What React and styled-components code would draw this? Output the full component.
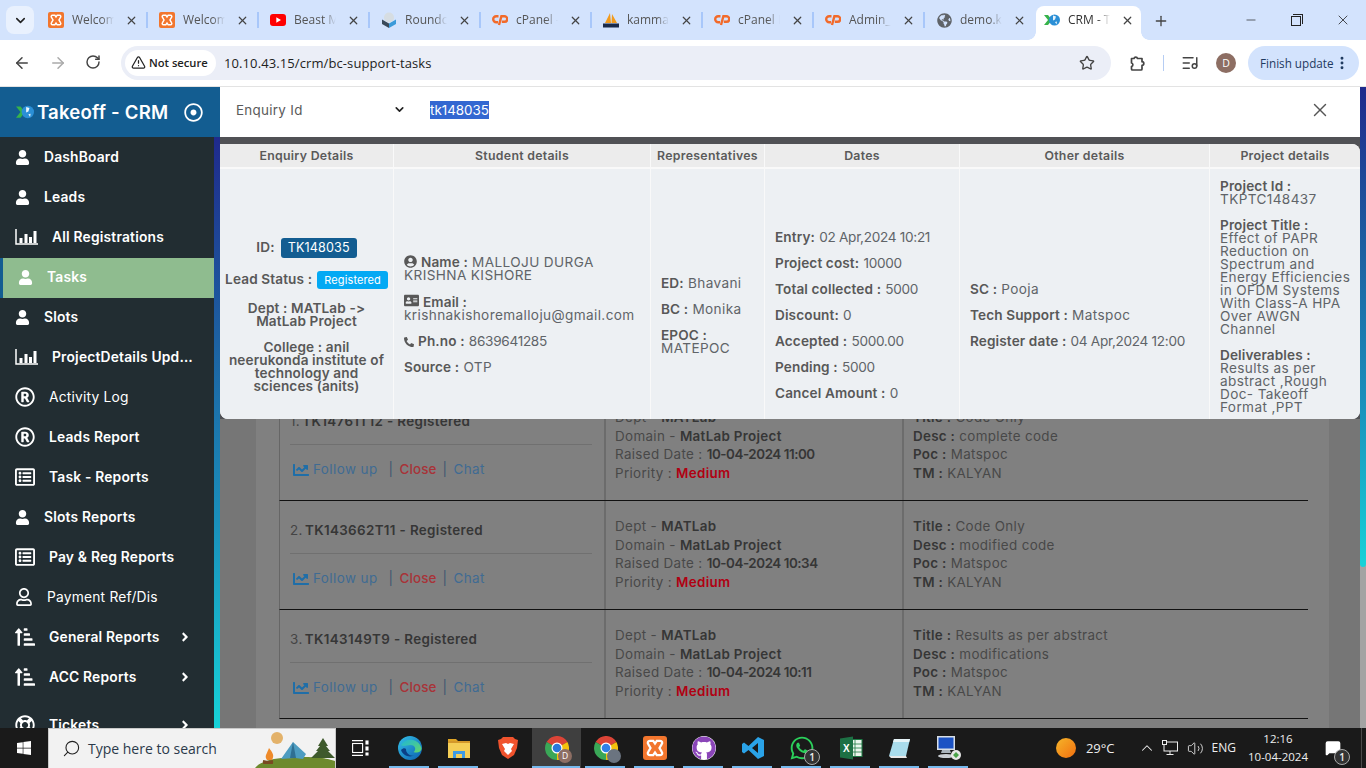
import React from 'react'
import styled, { createGlobalStyle } from 'styled-components'
import { ArrowLeft, ArrowRight, RotateCw, TriangleAlert, Star, ListMusic, EllipsisVertical, Plus, Minus, X, ChevronDown, ChevronUp, Search, MessageSquare, Volume2 } from 'lucide-react'
import {
  FaUser, FaRegUser, FaRegRegistered, FaRegListAlt, FaSortAmountUpAlt, FaRegLifeRing, FaAngleRight,
  FaRegDotCircle, FaUserCircle, FaAddressCard, FaPhoneAlt, FaChartLine, FaGlobeAmericas, FaWhatsapp, FaGithub, FaWindows,
} from 'react-icons/fa'

const MONT = `Inter, "Open Sans", sans-serif`
const CHROME = `"Open Sans", "Noto Sans", sans-serif`
const BLUE = '#135d91'
const STREAK = 'linear-gradient(to bottom, #1f2a8c 0%, #1d62a2 35%, #1a8fbb 65%, #17d2d8 100%)'

const Global = createGlobalStyle`
  html, body { margin: 0; padding: 0; background: #fff; overflow: hidden; }
  * { box-sizing: border-box; }
`

const Shell = styled.div`
  width: 1366px;
  height: 768px;
  display: flex;
  flex-direction: column;
  overflow: hidden;
  font-family: ${MONT};
`

/* browser chrome */
const TabStrip = styled.div`
  height: 40px;
  flex: none;
  background: #d3e3fd;
  display: flex;
  align-items: flex-start;
  padding: 6px 0 0 6px;
`
const TabSearch = styled.div`
  width: 28px;
  height: 28px;
  border-radius: 8px;
  background: #e9f1fe;
  color: #222;
  display: flex;
  align-items: center;
  justify-content: center;
  margin-right: 3px;
`
const Tab = styled.div`
  position: relative;
  width: ${p => (p.$active ? '105px' : '111px')};
  height: ${p => (p.$active ? '34px' : '28px')};
  padding: ${p => (p.$active ? '0 0 6px 8px' : '0 0 0 11px')};
  display: flex;
  align-items: center;
  gap: 8px;
  background: ${p => (p.$active ? '#fff' : 'transparent')};
  border-radius: 8px 8px 0 0;
  color: ${p => (p.$active ? '#333' : '#555')};
  &::after {
    content: '';
    display: ${p => (p.$noSep ? 'none' : 'block')};
    position: absolute;
    right: 0;
    top: 6px;
    height: 16px;
    width: 2px;
    background: #a8c7fa;
  }
`
const TabFlare = styled.span`
  position: absolute;
  bottom: 0;
  ${p => p.$side}: -8px;
  width: 8px;
  height: 8px;
  background: radial-gradient(circle at ${p => (p.$side === 'left' ? '0 0' : '100% 0')}, #d3e3fd 7.5px, #fff 8px);
`
const TabIcon = styled.span`
  width: 16px;
  height: 16px;
  flex: none;
  display: flex;
  align-items: center;
  justify-content: center;
`
const TabTitle = styled.span`
  width: 42px;
  flex: none;
  font: 12px/16px ${CHROME};
  white-space: nowrap;
  overflow: hidden;
  -webkit-mask-image: linear-gradient(to right, #000 70%, transparent 100%);
  mask-image: linear-gradient(to right, #000 70%, transparent 100%);
`
const TabClose = styled.span`
  display: flex;
  margin-left: 3px;
  color: #444;
`
const NewTab = styled.span`
  margin: 7px 0 0 12px;
  display: flex;
  color: #444;
`
const WindowButtons = styled.div`
  margin-left: auto;
  display: flex;
  margin-top: 6px;
  color: #222;
`
const WindowButton = styled.span`
  width: 46px;
  height: 16px;
  display: flex;
  align-items: center;
  justify-content: center;
`
const RestoreGlyph = styled.span`
  position: relative;
  width: 10px;
  height: 10px;
  border: 1px solid #222;
  background: #d3e3fd;
  margin: 2px 2px 0 0;
  &::before {
    content: '';
    position: absolute;
    left: 1px;
    top: -3px;
    width: 9px;
    height: 9px;
    border-top: 1px solid #222;
    border-right: 1px solid #222;
  }
`
const Toolbar = styled.div`
  height: 47px;
  flex: none;
  background: #fff;
  border-bottom: 1px solid #e3e3e3;
  border-radius: 8px 8px 0 0;
  display: flex;
  align-items: center;
  padding: 0 6px 1px 13px;
  color: #444;
`
const NavButton = styled.span`
  width: 18px;
  height: 18px;
  display: flex;
  margin-right: 18px;
  color: ${p => (p.$off ? '#aaa' : '#444')};
`
const Omnibox = styled.div`
  width: 990px;
  height: 34px;
  background: #ebeef7;
  border-radius: 17px;
  display: flex;
  align-items: center;
  padding: 0 16px 0 4px;
`
const SecureChip = styled.span`
  height: 26px;
  width: 91px;
  background: #fff;
  border-radius: 13px;
  display: flex;
  align-items: center;
  gap: 3px;
  padding-left: 6px;
  font: 600 11.2px/14px ${CHROME};
  color: #222;
`
const Url = styled.span`
  margin-left: 8px;
  font: 13px/16px ${CHROME};
  color: #222;
  letter-spacing: .1px;
`
const StarSlot = styled.span`
  margin-left: auto;
  display: flex;
`
const ToolIcon = styled.span`
  display: flex;
  margin-left: ${p => p.$left}px;
  color: #444;
`
const ToolDivider = styled.span`
  width: 1px;
  height: 16px;
  background: #b6cdf3;
  margin-left: 17px;
`
const Avatar = styled.span`
  width: 20px;
  height: 20px;
  border-radius: 50%;
  margin-left: ${p => p.$left || 18}px;
  background: #8d6e63;
  color: #fff;
  font: 10.5px/20px ${CHROME};
  text-align: center;
`
const UpdatePill = styled.div`
  margin-left: 12px;
  width: 111px;
  height: 34px;
  border-radius: 17px;
  background: #d3e3fd;
  color: #1f3a5f;
  display: flex;
  align-items: center;
  padding-left: 12px;
  font: 11.7px/16px ${CHROME};
  white-space: nowrap;
`

/* app */
const Page = styled.div`
  flex: 1;
  min-height: 0;
  display: flex;
  overflow: hidden;
`
const Side = styled.aside`
  width: 220px;
  flex: none;
  display: flex;
  flex-direction: column;
`
const Brand = styled.div`
  height: 50px;
  flex: none;
  background: ${BLUE};
  color: #fff;
  display: flex;
  align-items: center;
  padding: 0 17px 0 16px;
`
const BrandName = styled.span`
  margin-left: 3px;
  font: 600 18.6px/22px ${MONT};
  letter-spacing: .2px;
  white-space: nowrap;
`
const BrandToggle = styled.span`
  margin-left: auto;
  display: flex;
`
const SideBody = styled.div`
  flex: 1;
  min-height: 0;
  display: flex;
`
const Menu = styled.nav`
  width: 214px;
  background: #222d32;
  padding-top: 1px;
  overflow: hidden;
`
const Streak = styled.div`
  width: 6px;
  background: ${STREAK};
`
const MenuItem = styled.div`
  height: 40px;
  display: flex;
  align-items: center;
  gap: 14px;
  padding: 0 22px 2px 15px;
  margin-top: ${p => (p.$spaced ? '8px' : '0')};
  color: #fff;
  background: ${p => (p.$active ? '#8fbc8f' : 'transparent')};
  border-left: ${p => (p.$active ? `3px solid ${BLUE}` : 'none')};
`
const MenuIcon = styled.span`
  display: flex;
  flex: none;
  color: #fff;
`
const MenuLabel = styled.span`
  font: ${p => (p.$light ? 400 : 600)} 13.8px/18px ${MONT};
  letter-spacing: .2px;
  margin-right: ${p => (p.$wide ? '-8px' : '0')};
  white-space: nowrap;
  overflow: hidden;
  text-overflow: ellipsis;
  flex: 1;
  min-width: 0;
`

const Main = styled.main`
  flex: 1;
  min-width: 0;
  display: flex;
`
const Backdrop = styled.div`
  position: relative;
  flex: 1;
  min-width: 0;
  background: #767676;
  padding: 0 31px 0 36px;
  overflow: hidden;
`
const Card = styled.div`
  height: 100%;
  background: #808080;
  padding: 305px 21px 0 23px;
`
const TaskRow = styled.div`
  display: grid;
  grid-template-columns: 324px 298px 1fr;
  height: 109px;
  border-bottom: 1.5px solid #111;
  border-left: 1px solid #666;
`
const TaskMain = styled.div`
  display: flex;
  flex-direction: column;
  padding: 0 12px 0 10px;
`
const TaskTitle = styled.div`
  height: 53px;
  flex: none;
  padding-top: 20px;
  border-bottom: 1px solid #707070;
  font: 400 13.4px/19px ${MONT};
  letter-spacing: .4px;
  color: #444;
`
const TaskActions = styled.div`
  flex: 1;
  display: flex;
  align-items: center;
  padding: 0 0 6px 3px;
  font: 400 13.4px/19px ${MONT};
  letter-spacing: .45px;
  color: #3f6b93;
`
const FollowIcon = styled.span`
  display: flex;
  margin-right: 4px;
  color: #1f6ea8;
`
const Pipe = styled.span`
  margin: 0 ${p => p.$right ?? 6}px 0 ${p => p.$left ?? 6}px;
  color: #3c5670;
`
const CloseLink = styled.span`
  color: #a83338;
  font-weight: 500;
  letter-spacing: .15px;
`
const TaskCell = styled.div`
  border-left: 2px solid #6c6c6c;
  padding: 16px 0 0 9px;
  font: 400 13.4px/18.7px ${MONT};
  letter-spacing: .35px;
  color: #484848;
`
const Strong = styled.b`
  font-weight: 600;
  color: #363636;
  letter-spacing: .3px;
`
const TaskCode = styled(Strong)`
  margin-left: -2px;
  letter-spacing: .35px;
`
const DateText = styled(Strong)`
  letter-spacing: -.45px;
`
const Priority = styled.b`
  font-weight: 600;
  color: #b00012;
`

const Overlay = styled.div`
  position: absolute;
  left: 0;
  right: 0;
  top: 0;
  background: #505155;
`
const SearchBar = styled.div`
  height: 50px;
  background: #fff;
  display: flex;
  align-items: center;
  padding-bottom: 5px;
  color: #555;
`
const Picker = styled.div`
  width: 170px;
  margin-left: 16px;
  display: flex;
  align-items: center;
  justify-content: space-between;
  font: 400 13.4px/18px ${MONT};
  letter-spacing: .3px;
  color: #5a5a5a;
`
const Query = styled.span`
  margin-left: 24px;
  background: #3367d1;
  color: #fff;
  font: 400 13.4px/18px ${MONT};
  letter-spacing: 0;
`
const Dismiss = styled.span`
  margin-left: auto;
  margin-right: 29px;
  display: flex;
  color: #555;
`
const DetailPanel = styled.div`
  margin-top: 7px;
  display: grid;
  grid-template-columns: 174px 257px 114px 195px 250px 150px;
  grid-template-rows: 25px 250px;
  background: #f6f7f8;
  border-radius: 0 8px 8px 8px;
  overflow: hidden;
`
const HeadCell = styled.div`
  background: #ececec;
  border-right: ${p => (p.$last ? 'none' : '1.5px solid #f9f9f9')};
  border-bottom: 2px solid #f9f9f9;
  display: flex;
  align-items: center;
  justify-content: center;
  font: 600 12.3px/14px ${MONT};
  letter-spacing: .3px;
  color: #5a5a5a;
  white-space: nowrap;
`
const BodyCell = styled.div`
  background: #edf0f3;
  border-right: ${p => (p.$last ? 'none' : '1.5px solid #f9f9f9')};
  padding: ${p => p.$top ?? 42}px ${p => p.$pad ?? 10}px 0;
  display: flex;
  flex-direction: column;
  justify-content: center;
  text-align: ${p => (p.$center ? 'center' : 'left')};
  font: 400 13.6px/13px ${MONT};
  letter-spacing: .38px;
  color: #606468;
`
const Line = styled.div`
  margin-bottom: ${p => p.$gap ?? 13}px;
  white-space: ${p => (p.$keep ? 'nowrap' : 'normal')};
  &:last-child { margin-bottom: 0; }
`
const Key = styled.b`
  font-weight: 600;
  color: #585858;
  letter-spacing: .12px;
`
const Stamp = styled.span`
  letter-spacing: -.3px;
`
const KeyIcon = styled.span`
  display: inline-flex;
  align-items: center;
  height: 11px;
  vertical-align: -1px;
  margin-right: 4px;
  color: #585858;
`
const IdBadge = styled.span`
  display: inline-block;
  background: ${BLUE};
  color: #fff;
  border-radius: 3px;
  padding: 3px 7px;
  font: 400 12.6px/14px ${MONT};
  letter-spacing: .1px;
  margin-left: 2px;
`
const StatusBadge = styled.span`
  display: inline-block;
  background: #03a9f4;
  color: #fff;
  border-radius: 3px;
  padding: 3px 7px;
  font: 400 11px/12px ${MONT};
  letter-spacing: .1px;
  margin-left: 1px;
`

const ScrollTrack = styled.div`
  width: 6px;
  flex: none;
  background: #a3a3a3;
`
const ScrollThumb = styled.div`
  height: 480px;
  background: ${STREAK};
  border-radius: 0 0 3px 3px;
`

/* windows taskbar */
const Taskbar = styled.div`
  height: 40px;
  flex: none;
  background: #1a1a1a;
  display: flex;
  align-items: stretch;
  color: #fff;
`
const StartButton = styled.div`
  width: 48px;
  flex: none;
  display: flex;
  align-items: center;
  justify-content: center;
`
const SearchBox = styled.div`
  position: relative;
  width: 288px;
  flex: none;
  background: #f2f2f2;
  border: 1px solid #c9c9c9;
  border-bottom: none;
  display: flex;
  align-items: center;
  padding-left: 13px;
  color: #222;
  overflow: hidden;
`
const SearchText = styled.span`
  margin-left: 7px;
  font: 14px/20px ${CHROME};
  color: #2b3a4a;
`
const Scene = styled.span`
  position: absolute;
  right: 0;
  bottom: 0;
  display: flex;
`
const Dock = styled.div`
  display: flex;
`
const DockItem = styled.div`
  position: relative;
  width: 49px;
  display: flex;
  align-items: center;
  justify-content: center;
  background: ${p => (p.$focus ? '#3f3f3f' : 'transparent')};
  &::after {
    content: '';
    display: ${p => (p.$open ? 'block' : 'none')};
    position: absolute;
    bottom: 0;
    left: ${p => (p.$focus ? '0' : '4px')};
    right: ${p => (p.$focus ? '1px' : '5px')};
    height: 2px;
    background: #76b9ed;
  }
`
const Counter = styled.span`
  position: absolute;
  right: 6px;
  bottom: 3px;
  width: 16px;
  height: 16px;
  border-radius: 50%;
  background: #333;
  border: 1px solid #aaa;
  font: 600 10px/14px ${CHROME};
  text-align: center;
  color: #eee;
`
const MiniAvatar = styled.span`
  position: absolute;
  right: 9px;
  bottom: 5px;
  width: 14px;
  height: 14px;
  border-radius: 50%;
  background: ${p => p.$tone};
  color: #fff;
  font: 8.5px/14px ${CHROME};
  text-align: center;
`
const Tray = styled.div`
  margin-left: auto;
  display: flex;
  align-items: center;
  color: #eee;
  font: 12px/16px ${CHROME};
  padding-right: 4px;
  position: relative;
  &::after {
    content: '';
    position: absolute;
    right: 4px;
    top: 0;
    bottom: 0;
    width: 1px;
    background: #4a4a4a;
  }
`
const Sun = styled.span`
  width: 20px;
  height: 20px;
  border-radius: 50%;
  background: linear-gradient(135deg, #f5b52a, #f26f0f);
  margin-right: 10px;
`
const Temp = styled.span`
  font-size: 13px;
  margin-right: 23px;
`
const TrayIcon = styled.span`
  display: flex;
  margin-right: ${p => p.$right}px;
`
const Clock = styled.div`
  width: 74px;
  margin-left: 5px;
  text-align: center;
  font-size: 11.5px;
  line-height: 18px;
`
const Bell = styled.span`
  position: relative;
  display: flex;
  margin: 0 21px 0 10px;
`
const BellCount = styled(Counter)`
  right: -9px;
  bottom: -9px;
`

const Xampp = ({ size = 16 }) => (
  <svg width={size} height={size} viewBox="0 0 16 16">
    <rect width="16" height="16" rx="2" fill="#f2762e" />
    <path d="M4.500 3.200h2.300L8 5l1.200-1.800h2.300c1.200 0 1.700 1.300 1 2.200L11 8l1.500 2.600c.7.900.2 2.200-1 2.200H9.200L8 11l-1.200 1.800H4.500c-1.200 0-1.700-1.300-1-2.200L5 8 3.500 5.400c-.7-.9-.2-2.200 1-2.200z" fill="none" stroke="#fff" strokeWidth="1.5" />
  </svg>
)
const CPanel = () => (
  <svg width="16" height="12" viewBox="0 0 16 12">
    <path d="M6.500 2.200H4.200a3 3 0 0 0 0 6H6" fill="none" stroke="#f26a2a" strokeWidth="2.4" />
    <path d="M7 11l2.400-8.800h3a2.600 2.600 0 0 1 0 5.600H9.800" fill="none" stroke="#f26a2a" strokeWidth="2.4" />
  </svg>
)
const YouTube = () => (
  <svg width="16" height="12" viewBox="0 0 16 12">
    <rect width="16" height="12" rx="3" fill="#f00" />
    <path d="M6.300 3.200v5.600L11 6z" fill="#fff" />
  </svg>
)
const Roundcube = () => (
  <svg width="16" height="16" viewBox="0 0 16 16">
    <path d="M1 7.500 8 11.500v4.500L1 12z" fill="#3a4a5a" />
    <path d="M15 7.500 8 11.500v4.500l7-4z" fill="#3a9ad9" />
    <circle cx="8" cy="5.500" r="5" fill="#d6dde2" />
  </svg>
)
const Pma = () => (
  <svg width="16" height="16" viewBox="0 0 16 16">
    <path d="M2 11 7 1l1 10zM8.500 11 9 2l5 9z" fill="#f29b1d" />
    <rect x="0" y="11.500" width="16" height="4" fill="#1a2a4a" />
  </svg>
)
const CrmLogo = ({ size = 16 }) => (
  <svg width={size} height={size} viewBox="0 0 16 16">
    <path d="M0 3l4 0 4 5-4 5H0l4-5z" fill="#37b34a" />
    <circle cx="10.500" cy="8" r="5.500" fill="#2b8fd6" />
    <path d="M9 3.500l3 1-1 3-2 1zM11 10l2-.5-.5 3z" fill="#e8f4fb" />
  </svg>
)
const PuzzleIcon = () => (
  <svg width="18" height="18" viewBox="0 0 18 18" fill="none" stroke="#444" strokeWidth="1.700" strokeLinejoin="round">
    <path d="M3.500 4.500H6a1.800 1.800 0 0 1 3.500 0h4.500v3.200a1.800 1.800 0 0 1 0 3.600V15a1 1 0 0 1-1 1H4.500a1 1 0 0 1-1-1v-2.500a1.800 1.800 0 0 0 0-3.500z" />
  </svg>
)
const ChartBars = () => (
  <svg width="23" height="16" viewBox="0 0 23 16">
    <path d="M1 0v15h22" fill="none" stroke="#fff" strokeWidth="1.500" />
    <path d="M4.500 9h3v5h-3zM9.500 5h3v9h-3zM14 8h3v6h-3zM18.500 2h3v12h-3z" fill="#fff" />
  </svg>
)
const TaskView = () => (
  <svg width="17" height="16" viewBox="0 0 17 16" fill="none" stroke="#fff" strokeWidth="1.100">
    <path d="M0 .6h11M0 15.400h11" />
    <rect x=".6" y="3.500" width="10" height="9" />
    <rect x="14" y="1" width="2" height="3" fill="#fff" />
    <rect x="14" y="7" width="2" height="3" fill="#fff" />
    <rect x="14" y="13" width="2" height="2" fill="#fff" />
  </svg>
)
const Edge = () => (
  <svg width="24" height="24" viewBox="0 0 24 24">
    <defs>
      <linearGradient id="edgeA" x1="0" y1="0" x2="1" y2="1"><stop offset="0" stopColor="#35c1e8" /><stop offset="1" stopColor="#0b5fb0" /></linearGradient>
      <linearGradient id="edgeB" x1="0" y1="0" x2="1" y2="1"><stop offset="0" stopColor="#1fb6d8" /><stop offset="1" stopColor="#62d66a" /></linearGradient>
    </defs>
    <circle cx="12" cy="12" r="12" fill="url(#edgeA)" />
    <path d="M3 9C6 2 20 1 23.500 12c.3 4-5 5.500-8 4 3-2 2-7-3-7-4 0-7 2-9.500 0z" fill="url(#edgeB)" />
    <path d="M8 13c0 5 5 8 9 6-5 3-12 1-14-5 2-2 4-2 5-1z" fill="#0a3f86" />
  </svg>
)
const Folder = () => (
  <svg width="22" height="20" viewBox="0 0 22 20">
    <path d="M0 1h8l2 2H0z" fill="#e0a526" />
    <rect y="3" width="22" height="3" fill="#d4982a" />
    <rect y="5" width="22" height="15" fill="#f5ce56" />
    <path d="M5 13h12v7h-3v-4H8v4H5z" fill="#3f9be3" />
  </svg>
)
const Brave = () => (
  <svg width="20" height="24" viewBox="0 0 20 24">
    <path d="M5 1h10l2 2 3 1-1 8-3 7-6 4-6-4-3-7L0 4l3-1z" fill="#f0532d" />
    <path d="M4 8l4-1 2 1 2-1 4 1-3 5 1 2-4 4-4-4 1-2z" fill="#fff" />
  </svg>
)
const Chrome = ({ idx }) => (
  <svg width="24" height="24" viewBox="0 0 24 24">
    <g fill="none" strokeWidth="8">
      <circle cx="12" cy="12" r="8" stroke="#db4437" strokeDasharray="16.76 50.3" transform="rotate(-150 12 12)" />
      <circle cx="12" cy="12" r="8" stroke="#f4c20d" strokeDasharray="16.76 50.3" transform="rotate(-30 12 12)" />
      <circle cx="12" cy="12" r="8" stroke="#3aa757" strokeDasharray="16.76 50.3" transform="rotate(90 12 12)" />
    </g>
    <circle cx="12" cy="12" r="5.500" fill="#fff" />
    <circle cx="12" cy="12" r="4.300" fill={idx ? '#2f80e8' : '#2a78dc'} />
  </svg>
)
const VsCode = () => (
  <svg width="24" height="24" viewBox="0 0 24 24">
    <path fillRule="evenodd" d="M17 1l6 3v16l-6 3L7.500 14 3 17.500 1 16V8l2-1.500L7.500 10zM17 7l-6 5 6 5z" fill="#2aa3e8" />
  </svg>
)
const Excel = () => (
  <svg width="24" height="24" viewBox="0 0 24 24">
    <rect x="11" y="3.500" width="12" height="17" fill="#eaf5ec" stroke="#1e7a45" />
    <path d="M11 8h12M11 12h12M11 16h12M16 4v16" stroke="#1e7a45" strokeWidth=".8" />
    <path d="M1 2.500 14 .5v23L1 21.500z" fill="#1d7044" />
    <text x="4" y="16" fontSize="10" fontWeight="700" fill="#fff" fontFamily="Liberation Sans, sans-serif">X</text>
  </svg>
)
const Notepad = () => (
  <svg width="24" height="24" viewBox="0 0 24 24">
    <path d="M6 3h16l-4 17H1z" fill="#a9dcec" />
    <path d="M6 3h16l-.8 3H5z" fill="#e6f4f8" />
    <path d="M1 20h17l1 2H3z" fill="#e8e8e8" />
  </svg>
)
const Remote = () => (
  <svg width="26" height="26" viewBox="0 0 26 26">
    <rect x="1" y="1" width="18" height="14" fill="#d8dfe6" />
    <rect x="2.500" y="2.500" width="15" height="11" fill="#1b52c4" />
    <path d="M6 15h8l1 3H5z" fill="#aab4bc" />
    <ellipse cx="10" cy="21" rx="8" ry="2" fill="#c9ced3" />
    <circle cx="20" cy="20" r="5" fill="#e8e8e8" />
    <path d="M17 20l3-3v6zM23 20l-3-3v6z" fill="#4aa34a" />
  </svg>
)
const CampScene = () => (
  <svg width="80" height="38" viewBox="0 0 80 38">
    <path d="M0 38C8 28 30 27 50 27s26 3 30 4v7z" fill="#6d8a2d" />
    <circle cx="22" cy="8" r="6" fill="#e3b26a" />
    <path d="M12 30c-3-4 0-6 2-12 3 4 6 7 3 12z" fill="#ee8a2a" />
    <path d="M8 31l10 2M8 33l10-2" stroke="#7a4a22" strokeWidth="2" />
    <path d="M26 29 38 12l13 12-3 5-8-1z" fill="#4d9cc0" />
    <path d="M38 12l-3 16 6 0z" fill="#2f6f92" />
    <path d="M56 28l7-7-2 0 4-5-2 0 5-8 5 8-2 0 4 5-2 0 7 7z" fill="#3e5a2c" />
  </svg>
)

const tabs = [
  { id: 1, icon: <Xampp />, title: 'Welcome' },
  { id: 2, icon: <Xampp />, title: 'Welcome' },
  { id: 3, icon: <YouTube />, title: 'Beast Mo' },
  { id: 4, icon: <Roundcube />, title: 'Roundcu' },
  { id: 5, icon: <CPanel />, title: 'cPanel - T' },
  { id: 6, icon: <Pma />, title: 'kammava' },
  { id: 7, icon: <CPanel />, title: 'cPanel Fi' },
  { id: 8, icon: <CPanel />, title: 'Admin_p' },
  { id: 9, icon: <FaGlobeAmericas size={15} color="#5f6368" />, title: 'demo.ka', noSep: true },
  { id: 10, icon: <CrmLogo />, title: 'CRM - Ta', active: true, noSep: true },
]

const userIcon = <FaUser size={15} />
const chartIcon = <ChartBars />
const regIcon = <FaRegRegistered size={20} />
const listIcon = <FaRegListAlt size={20} />
const sortIcon = <FaSortAmountUpAlt size={20} />

const menu = [
  { label: 'DashBoard', icon: userIcon },
  { label: 'Leads', icon: userIcon },
  { label: 'All Registrations', icon: chartIcon },
  { label: 'Tasks', icon: userIcon, active: true },
  { label: 'Slots', icon: userIcon },
  { label: 'ProjectDetails Update', icon: chartIcon, wide: true },
  { label: 'Activity Log', icon: regIcon, light: true },
  { label: 'Leads Report', icon: regIcon },
  { label: 'Task - Reports', icon: listIcon },
  { label: 'Slots Reports', icon: userIcon },
  { label: 'Pay & Reg Reports', icon: listIcon },
  { label: 'Payment Ref/Dis', icon: <FaRegUser size={18} />, light: true },
  { label: 'General Reports', icon: sortIcon, arrow: true },
  { label: 'ACC Reports', icon: sortIcon, arrow: true },
  { label: 'Tickets', icon: <FaRegLifeRing size={20} />, arrow: true, spaced: true },
]

const tasks = [
  { no: 1, code: 'TK14761T12', title: 'Code Only', desc: 'complete code', raised: '10-04-2024 11:00' },
  { no: 2, code: 'TK143662T11', title: 'Code Only', desc: 'modified code', raised: '10-04-2024 10:34' },
  { no: 3, code: 'TK143149T9', title: 'Results as per abstract', desc: 'modifications', raised: '10-04-2024 10:11' },
]

const dock = [
  { id: 'edge', icon: <Edge />, open: true },
  { id: 'files', icon: <Folder />, open: true },
  { id: 'brave', icon: <Brave /> },
  { id: 'chrome1', icon: <Chrome />, open: true, focus: true, avatar: { tone: '#8d6e63', text: 'D' } },
  { id: 'chrome2', icon: <Chrome idx={1} />, open: true, avatar: { tone: '#6b7480', text: '' } },
  { id: 'xampp', icon: <Xampp size={24} />, open: true },
  { id: 'github', icon: <FaGithub size={24} color="#8a45b8" style={{ background: '#fff', borderRadius: '50%' }} />, open: true },
  { id: 'code', icon: <VsCode />, open: true },
  { id: 'whatsapp', icon: <FaWhatsapp size={26} color="#2bd05b" />, open: true, count: 1 },
  { id: 'excel', icon: <Excel />, open: true },
  { id: 'notepad', icon: <Notepad />, open: true },
  { id: 'remote', icon: <Remote />, open: true },
]

export default function App() {
  return (
    <Shell>
      <Global />
      <TabStrip>
        <TabSearch><ChevronDown size={15} strokeWidth={2.5} /></TabSearch>
        {tabs.map(t => (
          <Tab key={t.id} $active={t.active} $noSep={t.noSep}>
            {t.active && <TabFlare $side="left" />}
            <TabIcon>{t.icon}</TabIcon>
            <TabTitle>{t.title}</TabTitle>
            <TabClose><X size={13} strokeWidth={2.2} /></TabClose>
            {t.active && <TabFlare $side="right" />}
          </Tab>
        ))}
        <NewTab><Plus size={16} strokeWidth={2} /></NewTab>
        <WindowButtons>
          <WindowButton><Minus size={14} strokeWidth={1.2} /></WindowButton>
          <WindowButton><RestoreGlyph /></WindowButton>
          <WindowButton><X size={16} strokeWidth={1.2} /></WindowButton>
        </WindowButtons>
      </TabStrip>
      <Toolbar>
        <NavButton><ArrowLeft size={18} strokeWidth={2} /></NavButton>
        <NavButton $off><ArrowRight size={18} strokeWidth={2} /></NavButton>
        <NavButton><RotateCw size={16} strokeWidth={2.2} /></NavButton>
        <Omnibox>
          <SecureChip><TriangleAlert size={15} strokeWidth={2} />Not secure</SecureChip>
          <Url>10.10.43.15/crm/bc-support-tasks</Url>
          <StarSlot><Star size={16} strokeWidth={2} /></StarSlot>
        </Omnibox>
        <ToolIcon $left={17}><PuzzleIcon /></ToolIcon>
        <ToolDivider />
        <ToolIcon $left={17}><ListMusic size={18} strokeWidth={2} /></ToolIcon>
        <Avatar $left={17}>D</Avatar>
        <UpdatePill>Finish update<EllipsisVertical size={16} strokeWidth={2.4} /></UpdatePill>
      </Toolbar>

      <Page>
        <Side>
          <Brand>
            <CrmLogo size={18} />
            <BrandName>Takeoff - CRM</BrandName>
            <BrandToggle><FaRegDotCircle size={19} /></BrandToggle>
          </Brand>
          <SideBody>
            <Menu>
              {menu.map(m => (
                <MenuItem key={m.label} $active={m.active} $spaced={m.spaced}>
                  <MenuIcon>{m.icon}</MenuIcon>
                  <MenuLabel $light={m.light} $wide={m.wide}>{m.label}</MenuLabel>
                  {m.arrow && <FaAngleRight size={14} />}
                </MenuItem>
              ))}
            </Menu>
            <Streak />
          </SideBody>
        </Side>

        <Main>
          <Backdrop>
            <Card>
              {tasks.map(t => (
                <TaskRow key={t.no}>
                  <TaskMain>
                    <TaskTitle>{t.no}. <TaskCode>{t.code} - Registered</TaskCode></TaskTitle>
                    <TaskActions>
                      <FollowIcon><FaChartLine size={16} /></FollowIcon>
                      Follow up
                      <Pipe $left={11}>|</Pipe>
                      <CloseLink>Close</CloseLink>
                      <Pipe>|</Pipe>
                      Chat
                    </TaskActions>
                  </TaskMain>
                  <TaskCell>
                    <div>Dept - <Strong>MATLab</Strong></div>
                    <div>Domain - <Strong>MatLab Project</Strong></div>
                    <div>Raised Date : <DateText>{t.raised}</DateText></div>
                    <div>Priority : <Priority>Medium</Priority></div>
                  </TaskCell>
                  <TaskCell>
                    <div><Strong>Title :</Strong> {t.title}</div>
                    <div><Strong>Desc :</Strong> {t.desc}</div>
                    <div><Strong>Poc :</Strong> Matspoc</div>
                    <div><Strong>TM :</Strong> KALYAN</div>
                  </TaskCell>
                </TaskRow>
              ))}
            </Card>

            <Overlay>
              <SearchBar>
                <Picker>Enquiry Id<ChevronDown size={13} strokeWidth={3} color="#222" /></Picker>
                <Query>tk148035</Query>
                <Dismiss><X size={22} strokeWidth={1.5} /></Dismiss>
              </SearchBar>
              <DetailPanel>
                <HeadCell>Enquiry Details</HeadCell>
                <HeadCell>Student details</HeadCell>
                <HeadCell>Representatives</HeadCell>
                <HeadCell>Dates</HeadCell>
                <HeadCell>Other details</HeadCell>
                <HeadCell $last>Project details</HeadCell>

                <BodyCell $center $pad={3}>
                  <Line $gap={13} $keep><Key>ID:</Key> <IdBadge>TK148035</IdBadge></Line>
                  <Line $gap={13} $keep><Key>Lead Status :</Key> <StatusBadge>Registered</StatusBadge></Line>
                  <Line><Key>Dept : MATLab -&gt;<br />MatLab Project</Key></Line>
                  <Line><Key>College : anil<br />neerukonda institute of<br />technology and<br />sciences (anits)</Key></Line>
                </BodyCell>
                <BodyCell>
                  <Line><KeyIcon><FaUserCircle size={13} /></KeyIcon><Key>Name :</Key> MALLOJU DURGA KRISHNA KISHORE</Line>
                  <Line><KeyIcon><FaAddressCard size={15} /></KeyIcon><Key>Email :</Key><br />krishnakishoremalloju@gmail.com</Line>
                  <Line><KeyIcon><FaPhoneAlt size={10} /></KeyIcon><Key>Ph.no :</Key> <Stamp>8639641285</Stamp></Line>
                  <Line><Key>Source :</Key> OTP</Line>
                </BodyCell>
                <BodyCell $top={44}>
                  <Line><Key>ED:</Key> Bhavani</Line>
                  <Line><Key>BC :</Key> Monika</Line>
                  <Line><Key>EPOC :</Key><br />MATEPOC</Line>
                </BodyCell>
                <BodyCell>
                  <Line><Key>Entry:</Key> <Stamp>02 Apr,2024 10:21</Stamp></Line>
                  <Line><Key>Project cost:</Key> <Stamp>10000</Stamp></Line>
                  <Line><Key>Total collected :</Key> <Stamp>5000</Stamp></Line>
                  <Line><Key>Discount:</Key> 0</Line>
                  <Line><Key>Accepted :</Key> <Stamp>5000.00</Stamp></Line>
                  <Line><Key>Pending :</Key> <Stamp>5000</Stamp></Line>
                  <Line><Key>Cancel Amount :</Key> 0</Line>
                </BodyCell>
                <BodyCell>
                  <Line><Key>SC :</Key> Pooja</Line>
                  <Line><Key>Tech Support :</Key> Matspoc</Line>
                  <Line $keep><Key>Register date :</Key> <Stamp>04 Apr,2024 12:00</Stamp></Line>
                </BodyCell>
                <BodyCell $last $top={5}>
                  <Line $keep><Key>Project Id :</Key><br />TKPTC148437</Line>
                  <Line $keep><Key>Project Title :</Key><br />Effect of PAPR<br />Reduction on<br />Spectrum and<br />Energy Efficiencies<br />in OFDM Systems<br />With Class-A HPA<br />Over AWGN<br />Channel</Line>
                  <Line $keep><Key>Deliverables :</Key><br />Results as per<br />abstract ,Rough<br />Doc- Takeoff<br />Format ,PPT</Line>
                </BodyCell>
              </DetailPanel>
            </Overlay>
          </Backdrop>
          <ScrollTrack><ScrollThumb /></ScrollTrack>
        </Main>
      </Page>

      <Taskbar>
        <StartButton><FaWindows size={16} /></StartButton>
        <SearchBox>
          <Search size={19} strokeWidth={1.4} style={{ transform: 'scaleX(-1)' }} />
          <SearchText>Type here to search</SearchText>
          <Scene><CampScene /></Scene>
        </SearchBox>
        <Dock>
          <DockItem><TaskView /></DockItem>
          {dock.map(d => (
            <DockItem key={d.id} $open={d.open} $focus={d.focus}>
              {d.icon}
              {d.avatar && <MiniAvatar $tone={d.avatar.tone}>{d.avatar.text}</MiniAvatar>}
              {d.count && <Counter>{d.count}</Counter>}
            </DockItem>
          ))}
        </Dock>
        <Tray>
          <Sun />
          <Temp>29°C</Temp>
          <TrayIcon $right={6}><ChevronUp size={18} strokeWidth={1.4} /></TrayIcon>
          <TrayIcon $right={9}>
            <svg width="16" height="16" viewBox="0 0 16 16" fill="none" stroke="#eee"><rect x="2" y="2" width="13.500" height="9" /><path d="M8 11v3M4.500 14.500h7" /><rect x=".5" y=".5" width="4" height="4" fill="#1a1a1a" /></svg>
          </TrayIcon>
          <TrayIcon $right={8}><Volume2 size={17} strokeWidth={1.2} /></TrayIcon>
          ENG
          <Clock>12:16<br />10-04-2024</Clock>
          <Bell>
            <MessageSquare size={16} fill="#fff" color="#fff" />
            <BellCount>1</BellCount>
          </Bell>
        </Tray>
      </Taskbar>
    </Shell>
  )
}
